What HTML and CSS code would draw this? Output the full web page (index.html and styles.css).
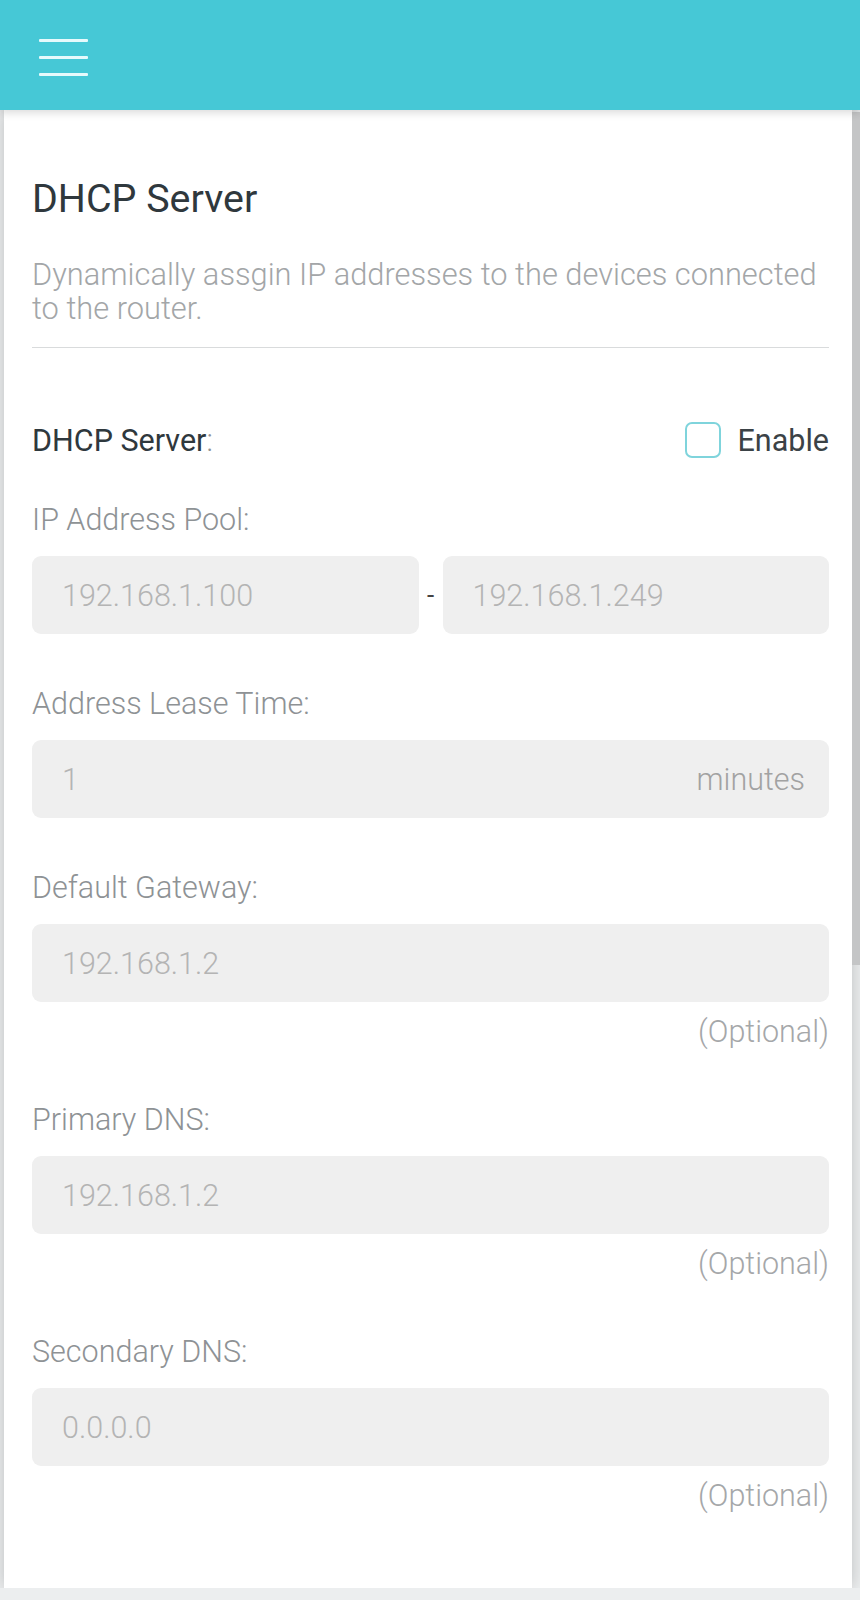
FILE: index.html
```
<!DOCTYPE html>
<html lang="en">
<head>
    <meta charset="UTF-8">
    <meta name="viewport" content="width=device-width, initial-scale=1.0">
    <title>DHCP Server</title>
    <link rel="stylesheet" href="styles.css">
</head>
<body>

    <header class="topbar">
        <button class="menu-btn" aria-label="Menu">
            <span></span>
            <span></span>
            <span></span>
        </button>
    </header>

    <main class="panel">
        <h1>DHCP Server</h1>
        <p class="desc">Dynamically assgin IP addresses to the devices connected to the router.</p>
        <hr class="divider">

        <!-- on / off -->
        <div class="switch-row">
            <span class="row-label">DHCP Server<span class="colon">:</span></span>
            <label class="check">
                <span class="box"></span>
                Enable
            </label>
        </div>

        <div class="field first">
            <div class="label">IP Address Pool:</div>
            <div class="range">
                <div class="input">192.168.1.100</div>
                <span class="dash">-</span>
                <div class="input">192.168.1.249</div>
            </div>
        </div>

        <div class="field">
            <div class="label">Address Lease Time:</div>
            <div class="input">
                <span>1</span>
                <span class="unit">minutes</span>
            </div>
        </div>

        <div class="field">
            <div class="label">Default Gateway:</div>
            <div class="input">192.168.1.2</div>
            <div class="hint">(Optional)</div>
        </div>

        <div class="field">
            <div class="label">Primary DNS:</div>
            <div class="input">192.168.1.2</div>
            <div class="hint">(Optional)</div>
        </div>

        <div class="field">
            <div class="label">Secondary DNS:</div>
            <div class="input">0.0.0.0</div>
            <div class="hint">(Optional)</div>
        </div>
    </main>

    <div class="scroll-thumb"></div>

</body>
</html>
```

FILE: styles.css
```
body {
    margin: 0;
    font-family: Roboto, 'Liberation Sans', sans-serif;
    background-color: #eceeef;
    position: relative;
}
.topbar {
    position: relative;
    z-index: 2;
    height: 110px;
    background: #46c8d6;
    box-shadow: 0 3px 8px rgba(0, 0, 0, 0.14);
}
.menu-btn {
    position: absolute;
    left: 39px;
    top: 39px;
    width: 49px;
    height: 37px;
    padding: 0;
    border: none;
    background: none;
    display: flex;
    flex-direction: column;
    justify-content: space-between;
}
.menu-btn span {
    display: block;
    height: 3px;
    border-radius: 1px;
    background: #e6fafc;
}
.panel {
    margin: 0 8px 0 4px;
    padding: 67px 23px 74px 28px;
    background: #fff;
    box-shadow: 0 0 16px rgba(0, 0, 0, 0.2);
}
h1 {
    margin: 0;
    font-size: 39.4px;
    line-height: 44px;
    font-weight: 400;
    color: #2f383d;
}
.desc {
    margin: 37px 0 0;
    font-size: 30.8px;
    line-height: 34px;
    font-weight: 300;
    color: #a3a6a8;
}
.divider {
    margin: 21px 0 0;
    border: none;
    border-top: 1px solid #d9dbdc;
}
.switch-row {
    margin-top: 74px;
    display: flex;
    justify-content: space-between;
    align-items: center;
    height: 36px;
    font-size: 30.5px;
}
.row-label {
    color: #2f383d;
}
.colon {
    color: #8f9396;
    font-weight: 300;
}
.check {
    display: flex;
    align-items: center;
    gap: 17px;
    color: #3b4246;
}
.box {
    width: 32px;
    height: 32px;
    border: 2px solid #7fd4dc;
    border-radius: 7px;
}
.field {
    margin-top: 52px;
}
.field.first {
    margin-top: 44px;
}
.label {
    font-size: 30.5px;
    line-height: 36px;
    font-weight: 300;
    color: #8e9295;
}
.input {
    margin-top: 18px;
    height: 78px;
    padding: 0 24px 0 30px;
    border-radius: 9px;
    background: #efefef;
    display: flex;
    align-items: center;
    justify-content: space-between;
    font-size: 30.5px;
    font-weight: 300;
    color: #b4b4b4;
}
.unit {
    color: #a2a2a2;
}
.range {
    display: grid;
    grid-template-columns: 1fr 24px 1fr;
    align-items: center;
    margin-top: 18px;
}
.range .input {
    margin-top: 0;
}
.dash {
    text-align: center;
    font-size: 26px;
    color: #444;
}
.hint {
    margin-top: 12px;
    text-align: right;
    font-size: 30.5px;
    line-height: 36px;
    font-weight: 300;
    color: #a5a7a9;
}
.scroll-thumb {
    position: absolute;
    right: 0;
    top: 112px;
    width: 8px;
    height: 853px;
    background: #c4c5c6;
}
```
